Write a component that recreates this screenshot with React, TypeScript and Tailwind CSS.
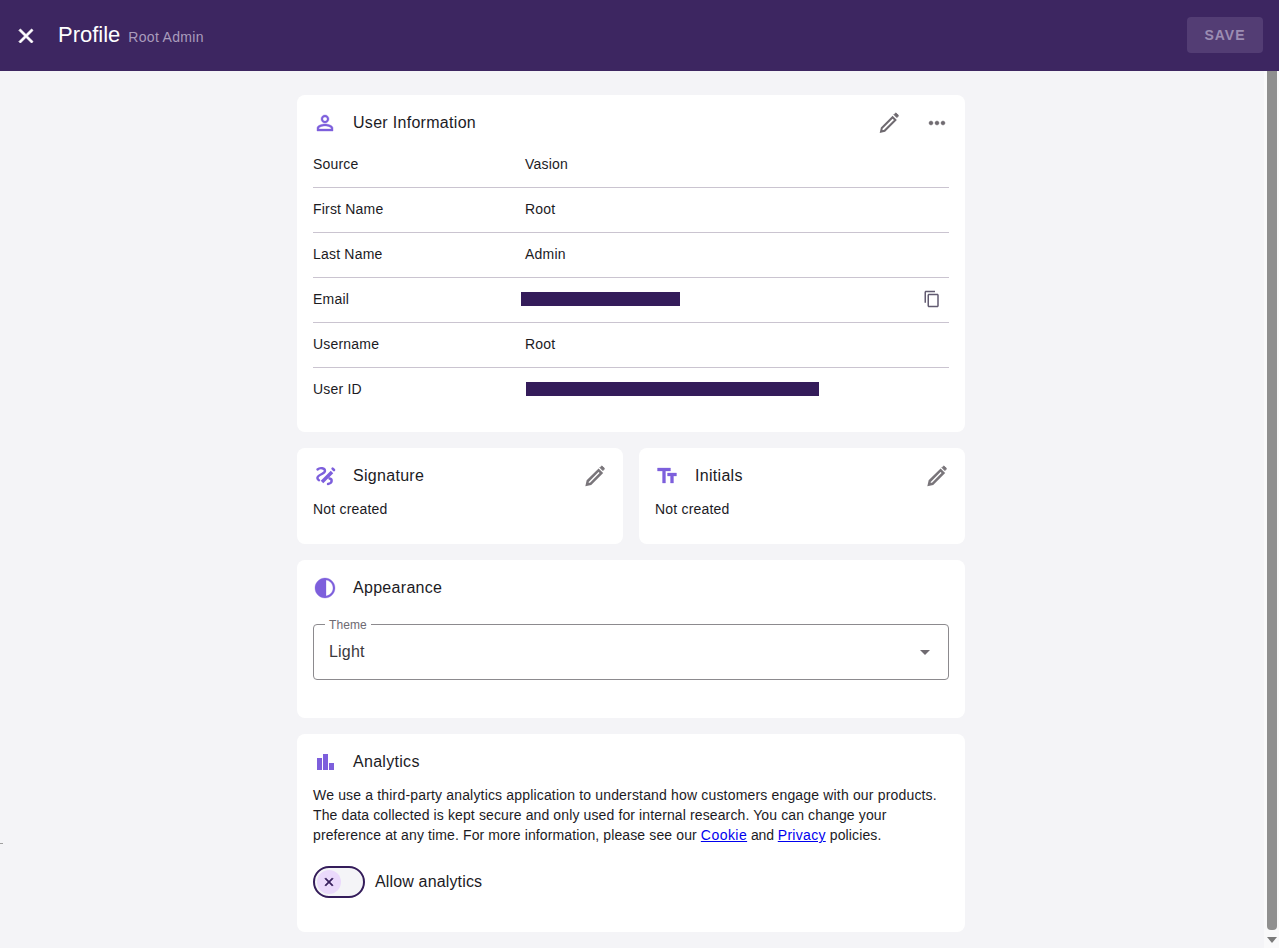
import React from "react";

const sans = "font-['Liberation_Sans',Arial,sans-serif]";

// icons are the material ones the product uses
function Icon({ d, className, bold }: { d: string; className: string; bold?: number }) {
  return (
    <svg viewBox="0 0 24 24" fill="currentColor" stroke={bold ? "currentColor" : "none"} strokeWidth={bold} className={className}>
      <path d={d} />
    </svg>
  );
}

function Pencil({ className, weight = 2 }: { className: string; weight?: number }) {
  return (
    <svg viewBox="0 0 24 24" fill="none" stroke="currentColor" className={className}>
      <path d="M4 20.6 4.8 17 15.6 6.2 18.4 9 7.6 19.8Z" strokeWidth={weight} strokeLinejoin="miter" />
      <path d="M17 3.6 18 2.6c.5-.5 1.2-.5 1.7 0l1.2 1.2c.5.5.5 1.2 0 1.7l-1 1Z" fill="currentColor" strokeWidth="1" />
    </svg>
  );
}

function SignatureIcon({ className }: { className: string }) {
  return (
    <svg viewBox="0 0 24 24" fill="none" stroke="currentColor" strokeLinecap="round" className={className}>
      <path d="M4.5 5.5C7 3.2 12 4 12 7c0 3-8 3.6-7.6 7.2.1 1 .8 1.6 1.6 2" strokeWidth="2.4" />
      <path d="M9 18 19 8" strokeWidth="3.6" strokeLinecap="butt" />
      <path d="M19.6 4.6 21 6" strokeWidth="2.6" />
      <path d="M16.5 14.5c3 .6 3.2 4.8-1.5 5.5" strokeWidth="2.4" />
    </svg>
  );
}

const icons = {
  close: "M19 6.41 17.59 5 12 10.59 6.41 5 5 6.41 10.59 12 5 17.59 6.41 19 12 13.41 17.59 19 19 17.59 13.41 12z",
  person:
    "M12 5.9c1.16 0 2.1.94 2.1 2.1s-.94 2.1-2.1 2.1S9.9 9.16 9.9 8s.94-2.1 2.1-2.1m0 9c2.97 0 6.1 1.46 6.1 2.1v1.1H5.9V17c0-.64 3.13-2.1 6.1-2.1M12 4C9.79 4 8 5.79 8 8s1.79 4 4 4 4-1.79 4-4-1.79-4-4-4zm0 9c-2.67 0-8 1.34-8 4v3h16v-3c0-2.66-5.33-4-8-4z",
  more: "M6 10c-1.1 0-2 .9-2 2s.9 2 2 2 2-.9 2-2-.9-2-2-2zm12 0c-1.1 0-2 .9-2 2s.9 2 2 2 2-.9 2-2-.9-2-2-2zm-6 0c-1.1 0-2 .9-2 2s.9 2 2 2 2-.9 2-2-.9-2-2-2z",
  copy: "M16 1H4c-1.1 0-2 .9-2 2v14h2V3h12V1zm3 4H8c-1.1 0-2 .9-2 2v14c0 1.1.9 2 2 2h11c1.1 0 2-.9 2-2V7c0-1.1-.9-2-2-2zm0 16H8V7h11v14z",
  text: "M2.5 4v3h5v12h3V7h5V4h-13zm19 5h-9v3h3v7h3v-7h3V9z",
  contrast: "M12 22c5.52 0 10-4.48 10-10S17.52 2 12 2 2 6.48 2 12s4.48 10 10 10zm1-17.93c3.94.49 7 3.85 7 7.93s-3.05 7.44-7 7.93V4.07z",
  chart: "M4 8h5v12H4zM10 4h5v16h-5zM16 13h5v7h-5z",
};

function CardHead({ icon, title, children }: { icon: React.ReactNode; title: string; children?: React.ReactNode }) {
  return (
    <div className="flex h-[24px] items-center">
      {icon}
      <span className="ml-4 flex-1 text-[16px] font-medium tracking-[0.3px] text-[#1c1b1f]">{title}</span>
      {children}
    </div>
  );
}

function Row({ label, value, last, children }: { label: string; value?: string; last?: boolean; children?: React.ReactNode }) {
  return (
    <div className={`flex h-[45px] items-center pb-[2px] text-[14px] tracking-[0.2px] text-[#1c1b1f] ${last ? "" : "border-b border-[#cac4d0]"}`}>
      <div className="w-[212px] shrink-0">{label}</div>
      {value && <div>{value}</div>}
      {children}
    </div>
  );
}

const purple = "h-6 w-6 shrink-0 text-[#7d5fdc]";

export default function App() {
  return (
    <div className={`relative flex h-[948px] flex-col overflow-hidden bg-[#f4f4f7] ${sans}`}>
      <header className="flex h-[71px] shrink-0 items-center bg-[#3d2661] pl-[14px] pr-[16px]">
        <Icon d={icons.close} bold={0.9} className="h-6 w-6 text-white" />
        <span className="ml-[20px] -mt-[2px] text-[22px] text-white">Profile</span>
        <span className="ml-2 mt-[4px] text-[14px] tracking-[0.3px] text-[#a99cbc]">Root Admin</span>
        <button className="ml-auto mb-px flex h-9 w-[76px] items-center justify-center rounded bg-[#533d74] text-[14px] font-bold tracking-[1px] text-[#9c8db3]">
          SAVE
        </button>
      </header>

      <div className="flex min-h-0 flex-1">
        <main className="min-w-0 flex-1 pl-[297px] pt-[24px]">
          <div className="flex w-[668px] flex-col gap-4">
            <section className="h-[337px] rounded-lg bg-white px-4 pt-4">
              <CardHead icon={<Icon d={icons.person} bold={0.4} className={purple} />} title="User Information">
                <Pencil className="h-6 w-6 text-[#6f6a70]" />
                <Icon d={icons.more} bold={0.4} className="ml-6 h-6 w-6 text-[#6f6a70]" />
              </CardHead>
              <div className="mt-[8px]">
                <Row label="Source" value="Vasion" />
                <Row label="First Name" value="Root" />
                <Row label="Last Name" value="Admin" />
                <Row label="Email">
                  <div className="-ml-1 h-[14px] w-[159px] bg-[#341c5a]" />
                  <Icon d={icons.copy} className="ml-auto mr-[8px] -mt-[1px] h-[18px] w-[18px] text-[#625b71]" />
                </Row>
                <Row label="Username" value="Root" />
                <Row label="User ID" last>
                  <div className="ml-px -mt-[2px] h-[14px] w-[293px] bg-[#341c5a]" />
                </Row>
              </div>
            </section>

            <div className="flex gap-4">
              {[
                { icon: <SignatureIcon className={purple} />, title: "Signature" },
                { icon: <Icon d={icons.text} bold={0.3} className={purple} />, title: "Initials" },
              ].map((c) => (
                <section key={c.title} className="h-[96px] flex-1 rounded-lg bg-white px-4 pt-4">
                  <CardHead icon={c.icon} title={c.title}>
                    <Pencil weight={2.5} className="h-6 w-6 text-[#79757a]" />
                  </CardHead>
                  <p className="mt-[11px] text-[14px] tracking-[0.2px] text-[#1c1b1f]">Not created</p>
                </section>
              ))}
            </div>

            <section className="h-[158px] rounded-lg bg-white px-4 pt-4">
              <CardHead icon={<Icon d={icons.contrast} bold={0.3} className={purple} />} title="Appearance" />
              <div className="relative mt-[24px] flex h-[56px] items-center justify-between rounded border border-[#8c8a8e] pl-[15px] pr-[12px]">
                <span className="absolute -top-[8px] left-[11px] bg-white px-[4px] text-[12px] leading-[16px] tracking-[0.1px] text-[#6e6a72]">Theme</span>
                <span className="text-[16px] tracking-[0.2px] text-[#3a383d]">Light</span>
                <span className="mr-[6px] h-0 w-0 border-x-[5px] border-t-[5px] border-x-transparent border-t-[#6f6a70]" />
              </div>
            </section>

            <section className="h-[198px] rounded-lg bg-white px-4 pt-4">
              <CardHead icon={<Icon d={icons.chart} className={purple} />} title="Analytics" />
              <p className="mt-[11px] text-[14px] leading-[20px] tracking-[0.12px] text-[#1c1b1f]">
                <span className="tracking-[0.17px]">We use a third-party analytics application to understand how customers engage with our products.</span>
                <br />
                The data collected is kept secure and only used for internal research. You can change your
                <br />
                preference at any time. For more information, please see our{" "}
                <a className="tracking-[0.45px] text-[#0000ee] underline">Cookie</a>
                <span className="tracking-[-0.1px]"> and </span>
                <a className="tracking-[0.3px] text-[#0000ee] underline">Privacy</a> policies.
              </p>
              <div className="mt-[21px] flex items-center">
                <div className="flex h-8 w-[52px] items-center rounded-full border-2 border-[#341c5a] bg-[#f4f4f7] pl-[2px]">
                  <div className="flex h-6 w-6 items-center justify-center rounded-full bg-[#ead9fb] text-[#341c5a]">
                    <Icon d={icons.close} bold={1.2} className="h-[14px] w-[14px]" />
                  </div>
                </div>
                <span className="ml-[10px] text-[16px] tracking-[0.15px] text-[#1c1b1f]">Allow analytics</span>
              </div>
            </section>
          </div>
        </main>

        {/* scrollbar, painted since the headless window does not show one */}
        <div className="flex w-[15px] shrink-0 flex-col items-center bg-[#f9f9fa]">
          <div className="h-[859px] w-[10px] rounded-b-[4px] bg-[#8f8f8f]" />
          <div className="mt-[7px] h-0 w-0 border-x-[5px] border-t-[6px] border-x-transparent border-t-[#7a7a7a]" />
        </div>
      </div>

      {/* stray tick at the left edge of the page */}
      <div className="absolute left-0 top-[843px] h-px w-[3px] bg-[#a0a0a0]" />
    </div>
  );
}
